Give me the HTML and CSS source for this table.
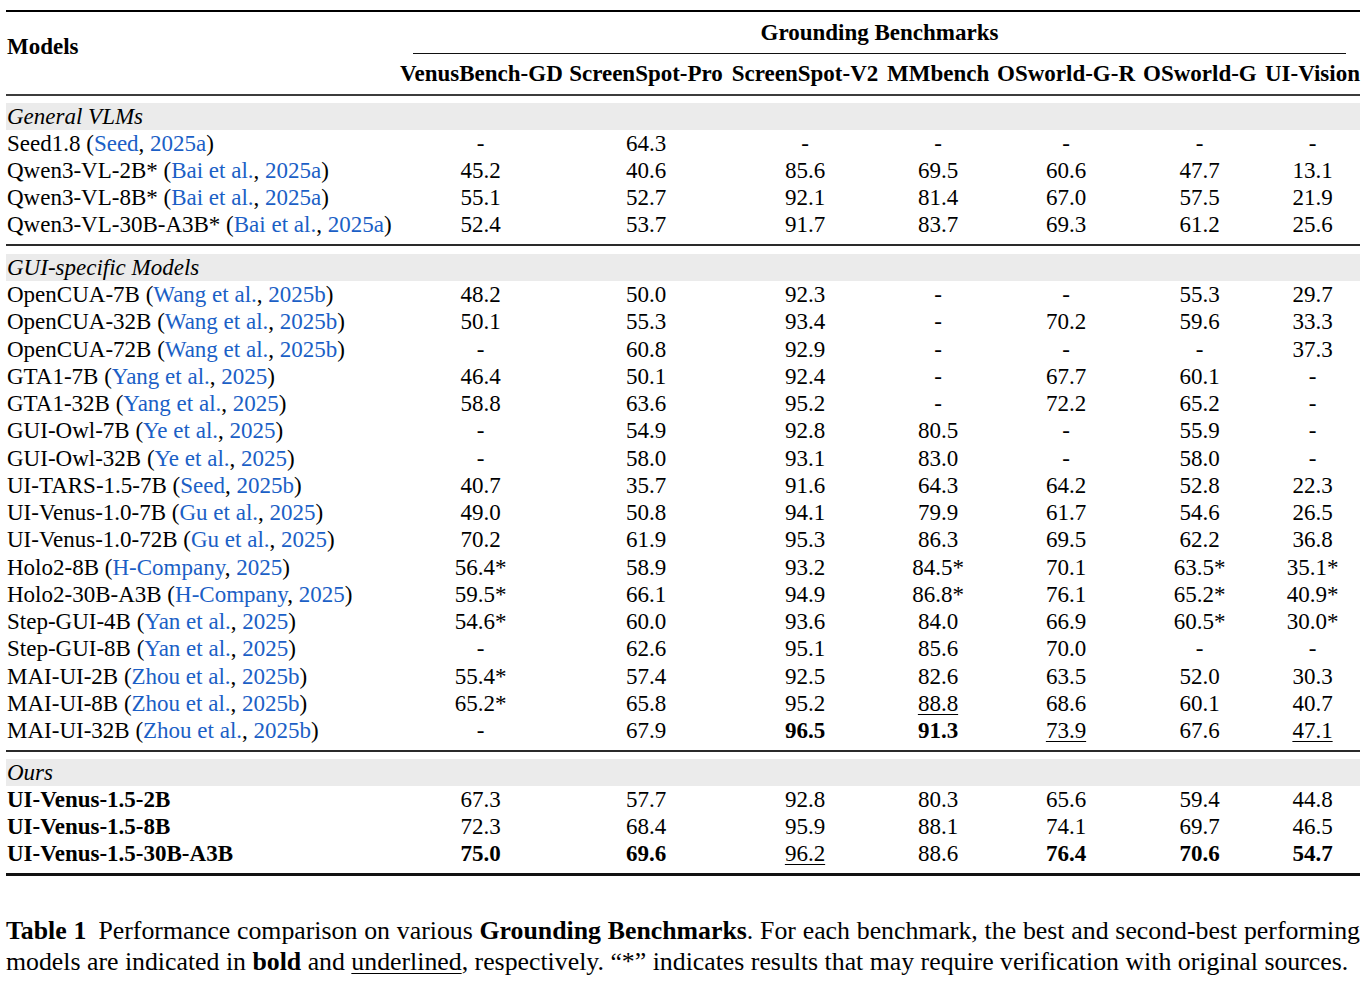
FILE: index.html
```html
<!DOCTYPE html>
<html lang="en">
<head>
<meta charset="utf-8">
<title>Table 1 – Grounding Benchmarks</title>
<link rel="stylesheet" href="styles.css">
</head>
<body>
<table class="tbl">
  <colgroup>
    <col class="c-model">
    <col class="c1"><col class="c2"><col class="c3"><col class="c4"><col class="c5"><col class="c6"><col class="c7">
  </colgroup>
  <thead>
    <tr class="h1">
      <th class="models" rowspan="2">Models</th>
      <th class="group" colspan="7"><div class="cmid">Grounding Benchmarks</div></th>
    </tr>
    <tr class="h2">
      <th>VenusBench-GD</th>
      <th>ScreenSpot-Pro</th>
      <th>ScreenSpot-V2</th>
      <th>MMbench</th>
      <th>OSworld-G-R</th>
      <th>OSworld-G</th>
      <th>UI-Vision</th>
    </tr>
  </thead>
  <tbody>
    <tr class="sec first"><td colspan="8">General VLMs</td></tr>
    <tr><td>Seed1.8 (<a>Seed</a>, <a>2025a</a>)</td><td>-</td><td>64.3</td><td>-</td><td>-</td><td>-</td><td>-</td><td>-</td></tr>
    <tr><td>Qwen3-VL-2B* (<a>Bai et al.</a>, <a>2025a</a>)</td><td>45.2</td><td>40.6</td><td>85.6</td><td>69.5</td><td>60.6</td><td>47.7</td><td>13.1</td></tr>
    <tr><td>Qwen3-VL-8B* (<a>Bai et al.</a>, <a>2025a</a>)</td><td>55.1</td><td>52.7</td><td>92.1</td><td>81.4</td><td>67.0</td><td>57.5</td><td>21.9</td></tr>
    <tr class="last"><td>Qwen3-VL-30B-A3B* (<a>Bai et al.</a>, <a>2025a</a>)</td><td>52.4</td><td>53.7</td><td>91.7</td><td>83.7</td><td>69.3</td><td>61.2</td><td>25.6</td></tr>
  </tbody>
  <tbody class="gui">
    <tr class="sec ruled gui-sec"><td colspan="8">GUI-specific Models</td></tr>
    <tr><td>OpenCUA-7B (<a>Wang et al.</a>, <a>2025b</a>)</td><td>48.2</td><td>50.0</td><td>92.3</td><td>-</td><td>-</td><td>55.3</td><td>29.7</td></tr>
    <tr><td>OpenCUA-32B (<a>Wang et al.</a>, <a>2025b</a>)</td><td>50.1</td><td>55.3</td><td>93.4</td><td>-</td><td>70.2</td><td>59.6</td><td>33.3</td></tr>
    <tr><td>OpenCUA-72B (<a>Wang et al.</a>, <a>2025b</a>)</td><td>-</td><td>60.8</td><td>92.9</td><td>-</td><td>-</td><td>-</td><td>37.3</td></tr>
    <tr><td>GTA1-7B (<a>Yang et al.</a>, <a>2025</a>)</td><td>46.4</td><td>50.1</td><td>92.4</td><td>-</td><td>67.7</td><td>60.1</td><td>-</td></tr>
    <tr><td>GTA1-32B (<a>Yang et al.</a>, <a>2025</a>)</td><td>58.8</td><td>63.6</td><td>95.2</td><td>-</td><td>72.2</td><td>65.2</td><td>-</td></tr>
    <tr><td>GUI-Owl-7B (<a>Ye et al.</a>, <a>2025</a>)</td><td>-</td><td>54.9</td><td>92.8</td><td>80.5</td><td>-</td><td>55.9</td><td>-</td></tr>
    <tr><td>GUI-Owl-32B (<a>Ye et al.</a>, <a>2025</a>)</td><td>-</td><td>58.0</td><td>93.1</td><td>83.0</td><td>-</td><td>58.0</td><td>-</td></tr>
    <tr><td>UI-TARS-1.5-7B (<a>Seed</a>, <a>2025b</a>)</td><td>40.7</td><td>35.7</td><td>91.6</td><td>64.3</td><td>64.2</td><td>52.8</td><td>22.3</td></tr>
    <tr><td>UI-Venus-1.0-7B (<a>Gu et al.</a>, <a>2025</a>)</td><td>49.0</td><td>50.8</td><td>94.1</td><td>79.9</td><td>61.7</td><td>54.6</td><td>26.5</td></tr>
    <tr><td>UI-Venus-1.0-72B (<a>Gu et al.</a>, <a>2025</a>)</td><td>70.2</td><td>61.9</td><td>95.3</td><td>86.3</td><td>69.5</td><td>62.2</td><td>36.8</td></tr>
    <tr><td>Holo2-8B (<a>H-Company</a>, <a>2025</a>)</td><td>56.4*</td><td>58.9</td><td>93.2</td><td>84.5*</td><td>70.1</td><td>63.5*</td><td>35.1*</td></tr>
    <tr><td>Holo2-30B-A3B (<a>H-Company</a>, <a>2025</a>)</td><td>59.5*</td><td>66.1</td><td>94.9</td><td>86.8*</td><td>76.1</td><td>65.2*</td><td>40.9*</td></tr>
    <tr><td>Step-GUI-4B (<a>Yan et al.</a>, <a>2025</a>)</td><td>54.6*</td><td>60.0</td><td>93.6</td><td>84.0</td><td>66.9</td><td>60.5*</td><td>30.0*</td></tr>
    <tr><td>Step-GUI-8B (<a>Yan et al.</a>, <a>2025</a>)</td><td>-</td><td>62.6</td><td>95.1</td><td>85.6</td><td>70.0</td><td>-</td><td>-</td></tr>
    <tr><td>MAI-UI-2B (<a>Zhou et al.</a>, <a>2025b</a>)</td><td>55.4*</td><td>57.4</td><td>92.5</td><td>82.6</td><td>63.5</td><td>52.0</td><td>30.3</td></tr>
    <tr><td>MAI-UI-8B (<a>Zhou et al.</a>, <a>2025b</a>)</td><td>65.2*</td><td>65.8</td><td>95.2</td><td><u>88.8</u></td><td>68.6</td><td>60.1</td><td>40.7</td></tr>
    <tr class="last"><td>MAI-UI-32B (<a>Zhou et al.</a>, <a>2025b</a>)</td><td>-</td><td>67.9</td><td><b>96.5</b></td><td><b>91.3</b></td><td><u>73.9</u></td><td>67.6</td><td><u>47.1</u></td></tr>
  </tbody>
  <tbody class="ours">
    <tr class="sec ruled ours-sec"><td colspan="8">Ours</td></tr>
    <tr><td><b>UI-Venus-1.5-2B</b></td><td>67.3</td><td>57.7</td><td>92.8</td><td>80.3</td><td>65.6</td><td>59.4</td><td>44.8</td></tr>
    <tr><td><b>UI-Venus-1.5-8B</b></td><td>72.3</td><td>68.4</td><td>95.9</td><td>88.1</td><td>74.1</td><td>69.7</td><td>46.5</td></tr>
    <tr class="last end"><td><b>UI-Venus-1.5-30B-A3B</b></td><td><b>75.0</b></td><td><b>69.6</b></td><td><u>96.2</u></td><td>88.6</td><td><b>76.4</b></td><td><b>70.6</b></td><td><b>54.7</b></td></tr>
  </tbody>
</table>
<p class="caption"><span class="cap-line"><b class="label">Table 1</b>Performance comparison on various <b>Grounding Benchmarks</b>. For each benchmark, the best and second-best performing</span><span class="cap-line2">models are indicated in <b>bold</b> and <u>underlined</u>, respectively. “*” indicates results that may require verification with original sources.</span></p>
</body>
</html>
```

FILE: styles.css
```css
html, body {
  background: #fff;
}
body {
  margin: 0;
  padding: 10px 8px 0 6px;
  font-family: "Liberation Serif", "Times New Roman", serif;
  font-size: 23px;
  color: #000;
}
.tbl {
  border-collapse: separate;
  border-spacing: 0;
  table-layout: fixed;
  width: 1354px;
}
.c-model { width: 390px; }
.c1 { width: 169px; }
.c2 { width: 162px; }
.c3 { width: 156px; }
.c4 { width: 110px; }
.c5 { width: 146px; }
.c6 { width: 121px; }
.c7 { width: 100px; }

.tbl th, .tbl td {
  padding: 0 4px;
  line-height: 27px;
  text-align: center;
  white-space: nowrap;
  font-weight: normal;
}
.tbl th { font-weight: bold; }
.tbl .h2 th:last-child,
.tbl tr td:last-child:not(:first-child) {
  padding-right: 0;
  padding-left: 5px;
}

/* header */
.tbl .models {
  text-align: left;
  vertical-align: top;
  padding: 21px 0 0 1px;
  border-top: 2px solid #000;
  border-bottom: 2px solid #3c3c3c;
}
.tbl .group {
  border-top: 2px solid #000;
  padding: 7px 0 0 0;
}
.cmid {
  margin: 0 14px 0 17px;
  padding-bottom: 6.5px;
  border-bottom: 1px solid #111;
}
.h2 th {
  padding-top: 6.5px;
  padding-bottom: 7px;
  border-bottom: 2px solid #3c3c3c;
}

/* body */
.tbl td:first-child {
  text-align: left;
  padding-left: 1px;
}
.tbl .sec td {
  font-style: italic;
  padding-top: 7px;
  background: linear-gradient(#ebebeb, #ebebeb) no-repeat left bottom / 100% 27px;
}
.tbl .sec.ruled td {
  border-top: 2px solid #2a2a2a;
}
.tbl .gui-sec td { padding-top: 8px; }
.tbl .gui td { line-height: 27.25px; }
.tbl .gui .sec td { line-height: 27px; }
.tbl .last td { padding-bottom: 6px; }
.tbl .end td { border-bottom: 3px solid #111; }

.tbl a {
  color: #1b5fc6;
  text-decoration: none;
}
.tbl u, .caption u {
  text-decoration: underline;
  text-decoration-thickness: 1px;
  text-underline-offset: 3px;
}

/* caption */
.caption {
  margin: 39px 0 0 0;
  width: 1354px;
  font-size: 25.8px;
  line-height: 31px;
}
.cap-line {
  display: block;
  text-align: justify;
  text-align-last: justify;
  white-space: nowrap;
}
.cap-line2 {
  display: block;
  white-space: nowrap;
}
.caption .label {
  margin-right: 12px;
}
```
